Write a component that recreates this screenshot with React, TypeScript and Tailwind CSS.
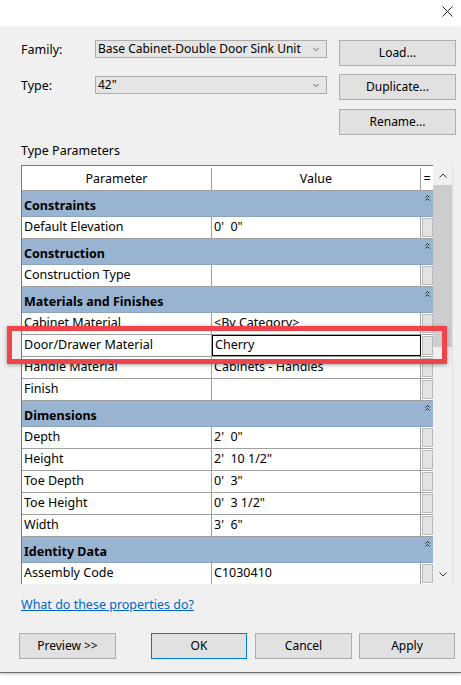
import React from 'react';

type Row = { name: string; value: string; selected?: boolean };
type Group = { title: string; rows: Row[] };

const groups: Group[] = [
  { title: 'Constraints', rows: [{ name: 'Default Elevation', value: `0'  0"` }] },
  { title: 'Construction', rows: [{ name: 'Construction Type', value: '' }] },
  {
    title: 'Materials and Finishes',
    rows: [
      { name: 'Cabinet Material', value: '<By Category>' },
      { name: 'Door/Drawer Material', value: 'Cherry', selected: true },
      { name: 'Handle Material', value: 'Cabinets - Handles' },
      { name: 'Finish', value: '' },
    ],
  },
  {
    title: 'Dimensions',
    rows: [
      { name: 'Depth', value: `2'  0"` },
      { name: 'Height', value: `2'  10 1/2"` },
      { name: 'Toe Depth', value: `0'  3"` },
      { name: 'Toe Height', value: `0'  3 1/2"` },
      { name: 'Width', value: `3'  6"` },
    ],
  },
  {
    title: 'Identity Data',
    rows: [
      { name: 'Assembly Code', value: 'C1030410' },
      { name: '', value: '' },
    ],
  },
];

function Chevron({ up = false, className = '' }: { up?: boolean; className?: string }) {
  return (
    <svg width="8" height="5" viewBox="0 0 8 5" className={className}>
      <polyline
        points={up ? '0.5,4.5 4,1 7.5,4.5' : '0.5,0.5 4,4 7.5,0.5'}
        fill="none"
        stroke="#333"
        strokeWidth="1"
      />
    </svg>
  );
}

function Collapse() {
  return (
    <svg width="5" height="6" viewBox="0 0 5 6" className="absolute right-[3px] top-[4px]">
      <polyline points="0.5,2.5 2.5,0.5 4.5,2.5" fill="none" stroke="#222" strokeWidth="1" />
      <polyline points="0.5,5.5 2.5,3.5 4.5,5.5" fill="none" stroke="#222" strokeWidth="1" />
    </svg>
  );
}

function Dropdown({ text }: { text: string }) {
  return (
    <div className="flex h-[18px] w-[232px] items-center justify-between whitespace-nowrap border border-[#acacac] bg-[#e5e5e5] pl-[2px] pr-[7px] text-[12px] leading-none text-black">
      <span>{text}</span>
      <Chevron className="w-[6px]" />
    </div>
  );
}

function Btn({ label, primary = false, className = '' }: { label: string; primary?: boolean; className?: string }) {
  return (
    <button
      className={`flex h-[26px] items-center justify-center border bg-[#e1e1e1] text-[12px] text-black ${
        primary ? 'border-[#0078d7]' : 'border-[#adadad]'
      } ${className}`}
    >
      {label}
    </button>
  );
}

export default function App() {
  return (
    <div className="relative h-[685px] w-[461px] overflow-hidden bg-white font-['Noto_Sans',sans-serif] text-black">
      {/* title bar */}
      <div className="flex h-[27px] items-start justify-end bg-white pr-[8px] pt-[6px]">
        <svg width="11" height="11" viewBox="0 0 11 11">
          <path d="M0.5 0.5 L10.5 10.5 M10.5 0.5 L0.5 10.5" stroke="#222" strokeWidth="1" />
        </svg>
      </div>

      <div className="flex h-[646px] flex-col border-b border-[#6f6f6f] bg-[#f0f0f0] pt-[13px] shadow-[0_1px_3px_rgba(0,0,0,0.25)]">
        {/* top section */}
        <div className="flex pl-[21px] pr-[5px]">
          <div className="flex flex-col">
            <div className="flex h-[18px] items-center">
              <span className="w-[74px] pt-[3px] text-[12.5px]">Family:</span>
              <Dropdown text="Base Cabinet-Double Door Sink Unit" />
            </div>
            <div className="mt-[18px] flex h-[18px] items-center">
              <span className="w-[74px] pt-[3px] text-[12.5px]">Type:</span>
              <Dropdown text={'42"'} />
            </div>
          </div>
          <div className="ml-auto flex w-[117px] flex-col">
            <Btn label="Load..." />
            <Btn label="Duplicate..." className="mt-[8px]" />
            <Btn label="Rename..." className="mt-[9px]" />
          </div>
        </div>

        <div className="ml-[21px] mt-[9px] text-[12.5px] leading-[14px]">Type Parameters</div>

        {/* table */}
        <div className="ml-[21px] mt-[7px] flex h-[419px] w-[432px]">
          <div className="flex w-[412px] flex-col overflow-hidden border-l border-t border-[#7a7a7a] bg-white text-[12.5px]">
            <div className="flex h-[25px] shrink-0 border-b border-[#a0a0a0] pt-[2px]">
              <div className="flex w-[190px] items-center justify-center border-r border-[#a0a0a0]">Parameter</div>
              <div className="flex w-[209px] items-center justify-center border-r border-[#a0a0a0]">Value</div>
              <div className="flex w-[12px] items-center justify-center">=</div>
            </div>
            {groups.map((g) => (
              <React.Fragment key={g.title}>
                <div className="relative flex h-[26px] shrink-0 items-center border-b border-[#8aa4c4] bg-[#99b4d1] pl-[2px] pt-[5px] font-bold">
                  {g.title}
                  <Collapse />
                </div>
                {g.rows.map((r, i) => (
                  <div key={g.title + i} className="flex h-[22px] shrink-0 border-b border-[#a0a0a0]">
                    <div className="flex w-[190px] items-center border-r border-[#a0a0a0] pl-[2px]">{r.name}</div>
                    <div
                      className={`flex w-[209px] items-center whitespace-pre pl-[2px] ${
                        r.selected ? 'border border-black' : 'border-r border-[#a0a0a0]'
                      }`}
                    >
                      {r.value}
                    </div>
                    <div className="flex w-[12px] items-stretch py-[1px] pl-[1px]">
                      <div className="w-full border border-[#b9b9b9] bg-[#e3e3e3]" />
                    </div>
                  </div>
                ))}
              </React.Fragment>
            ))}
          </div>
          {/* scrollbar */}
          <div className="flex w-[20px] flex-col border-r border-[#e0e0e0] bg-[#f0f0f0]">
            <div className="flex h-[20px] items-center justify-center">
              <Chevron up />
            </div>
            <div className="h-[162px] bg-[#cdcdcd]" />
            <div className="flex-1" />
            <div className="flex h-[20px] items-center justify-center">
              <Chevron />
            </div>
          </div>
        </div>

        <a className="ml-[21px] mt-[14px] w-fit text-[12.5px] leading-[14px] text-[#0066cc] underline">
          What do these properties do?
        </a>

        <div className="mt-[21px] flex pl-[19px]">
          <Btn label="Preview >>" className="h-[25px] w-[97px]" />
          <Btn label="OK" primary className="ml-[35px] h-[25px] w-[96px]" />
          <Btn label="Cancel" className="ml-[8px] h-[25px] w-[97px]" />
          <Btn label="Apply" className="ml-[7px] h-[25px] w-[96px]" />
        </div>
      </div>

      {/* annotation highlight */}
      <div className="absolute left-[7px] top-[326px] h-[38px] w-[440px] border-[5px] border-[#f0444b] shadow-[0_1px_4px_rgba(0,0,0,0.35)]" />
    </div>
  );
}
